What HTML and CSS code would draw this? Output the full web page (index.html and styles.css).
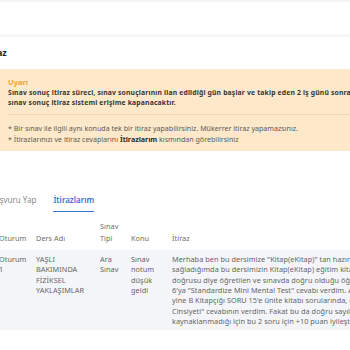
FILE: index.html
```html
<!DOCTYPE html>
<html lang="tr">
<head>
<meta charset="utf-8">
<link rel="stylesheet" href="styles.css">
</head>
<body>
<div class="page">
  <div class="topbar"></div>
  <div class="titlebar"><h1 class="title">İtiraz</h1></div>
  <div class="alert">
    <div class="alert-title">Uyarı</div>
    <p class="alert-text">Sınav sonuç itiraz süreci, sınav sonuçlarının ilan edildiği gün başlar ve takip eden 2 iş günü sonrası<br>sınav sonuç itiraz sistemi erişime kapanacaktır.</p>
    <div class="alert-rule"></div>
    <p class="alert-note">* Bir sınav ile ilgili aynı konuda tek bir itiraz yapabilirsiniz. Mükerrer itiraz yapamazsınız.<br>* İtirazlarınızı ve itiraz cevaplarını <b>İtirazlarım</b> kısmından görebilirsiniz</p>
  </div>
  <div class="content">
    <nav class="tabs">
      <span class="tab">Başvuru Yap</span>
      <span class="tab active">İtirazlarım</span>
    </nav>
    <table class="grid">
      <colgroup>
        <col class="w-oturum"><col class="w-ders"><col class="w-tip"><col class="w-konu"><col class="w-itiraz">
      </colgroup>
      <thead>
        <tr>
          <th class="first">Oturum</th>
          <th>Ders Adı</th>
          <th>Sınav<br>Tipi</th>
          <th>Konu</th>
          <th>İtiraz</th>
        </tr>
      </thead>
      <tbody>
        <tr>
          <td class="first">Oturum<br>1</td>
          <td>YAŞLI<br>BAKIMINDA<br>FİZİKSEL<br>YAKLAŞIMLAR</td>
          <td>Ara<br>Sınav</td>
          <td>Sınav<br>notum<br>düşük<br>geldi</td>
          <td>Merhaba ben bu dersimize "Kitap(eKitap)" tan hazırlandım ve<br>sağladığımda bu dersimizin Kitap(eKitap) eğitim kitabında<br>doğrusu diye öğretilen ve sınavda doğru olduğu öğretilen<br>6'ya "Standardize Mini Mental Test" cevabı verdim. Ancak<br>yine B Kitapçığı SORU 15'e ünite kitabı sorularında, doğru<br>Cinsiyeti" cevabının verdim. Fakat bu da doğru sayılmadı.<br>kaynaklanmadığı için bu 2 soru için +10 puan iyileştirme</td>
        </tr>
      </tbody>
    </table>
  </div>
</div>
</body>
</html>
```

FILE: styles.css
```css
html, body {
  margin: 0;
  padding: 0;
}
body {
  background: #f4f5f7;
  font-family: "Noto Sans", "Open Sans", sans-serif;
  width: 350px;
  height: 350px;
  overflow: hidden;
}
.page {
  padding-top: 2px;
}
.topbar {
  height: 32px;
  background: #ffffff;
}
.titlebar {
  margin-top: 3px;
  height: 32px;
  background: #ffffff;
  display: flex;
  align-items: center;
}
.title {
  margin: -2px 0 0 -17px;
  font-size: 9px;
  font-weight: 700;
  color: #222;
}
.alert {
  background: #fde9c9;
  padding: 7px 0 6px 8px;
  white-space: nowrap;
  overflow: hidden;
}
.alert-title {
  color: #f4a42b;
  font-weight: 700;
  font-size: 7.5px;
  line-height: 12px;
}
.alert-text {
  margin: 0;
  color: #3a3530;
  font-weight: 700;
  font-size: 6.8px;
  letter-spacing: 0.17px;
  line-height: 10px;
}
.alert-rule {
  height: 1px;
  background: #f1d7b0;
  margin: 6px 0 8px;
}
.alert-note {
  margin: 0;
  color: #615a53;
  font-size: 7.1px;
  line-height: 11px;
}
.alert-note b {
  color: #2d2a27;
}
.content {
  background: #ffffff;
  height: 200px;
  padding-top: 43px;
  overflow: hidden;
}
.tabs {
  display: flex;
  gap: 17px;
  margin-left: -10px;
  font-size: 8px;
}
.tab {
  color: #8a8a8a;
  padding-bottom: 5px;
  line-height: 12px;
}
.tab.active {
  color: #3b6fd6;
  font-weight: 600;
  border-bottom: 1.5px solid #3b6fd6;
}
.grid {
  border-collapse: collapse;
  table-layout: fixed;
  width: 380px;
  margin-left: -3px;
  font-size: 7.3px;
  letter-spacing: 0.05px;
  color: #666;
  white-space: nowrap;
}
.w-oturum { width: 39px; }
.w-ders { width: 64px; }
.w-tip { width: 31px; }
.w-konu { width: 41px; }
.w-itiraz { width: 205px; }
.grid th, .grid td {
  overflow: hidden;
  padding-left: 0;
  padding-right: 0;
}
.grid th {
  font-weight: 400;
  text-align: left;
  vertical-align: bottom;
  color: #6e6e6e;
  line-height: 12px;
  padding-top: 8px;
  padding-bottom: 6px;
}
.grid td {
  vertical-align: top;
  line-height: 10.4px;
  padding-top: 3.8px;
  padding-bottom: 3.6px;
  background: #f4f5f9;
}
.grid .first {
  padding-left: 2px;
}
```
